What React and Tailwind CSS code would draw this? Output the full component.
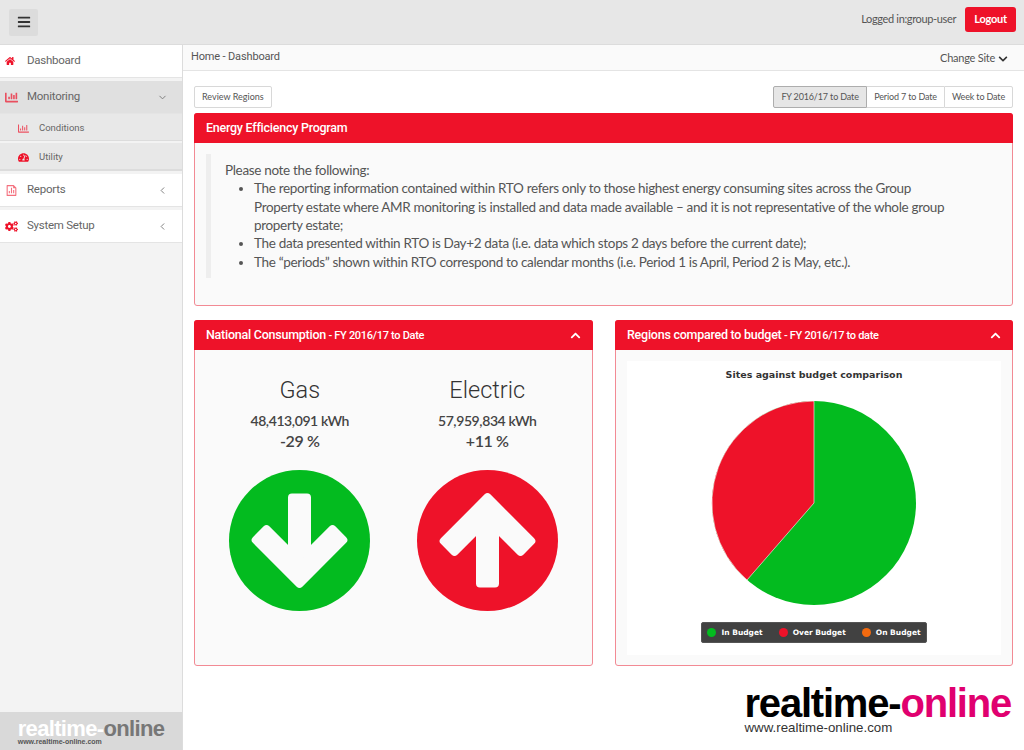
import { FaBars, FaHome, FaChartBar, FaRegChartBar, FaTachometerAlt, FaCogs, FaChevronDown, FaChevronUp } from "react-icons/fa";
import { RiFileChartLine } from "react-icons/ri";
import { ChevronDown, ChevronLeft } from "lucide-react";

const heading = "font-['Roboto',sans-serif]";
const arrow = "M-7.5 -43 L7.5 -43 L7.5 14.16 L33 -11.3 L43.8 -0.5 L0 43.3 L-43.8 -0.5 L-33 -11.3 L-7.5 14.16 Z";

const Panel = ({ title, small, collapse, className, children }) => (
  <section className={`flex flex-col rounded-[3px] border border-[#f28a94] bg-[#fafafa] ${className}`}>
    <header className={`-mx-px -mt-px flex h-[30px] shrink-0 items-center justify-between rounded-t-[3px] bg-[#ee1229] pl-3 pr-3 text-[12.5px] font-medium tracking-[-0.25px] text-white ${heading}`}>
      <span>
        {title}
        {small && <span className="text-[11px] tracking-[-0.3px]"> - {small}</span>}
      </span>
      {collapse && <FaChevronUp size={11} />}
    </header>
    {children}
  </section>
);

const Meter = ({ label, kwh, pct, color, up }) => (
  <div className="flex w-[187.5px] flex-col items-center">
    <h3 className={`mt-[25px] text-[23.5px] leading-[30px] font-light text-[#333] ${heading}`}>{label}</h3>
    <p className="mt-[6px] text-[14px] leading-[20px] font-semibold tracking-[-0.4px] text-[#444]">{kwh}</p>
    <p className="text-[16px] leading-[20px] font-semibold tracking-[-0.4px] text-[#444]">{pct}</p>
    <svg className="mt-[19px]" width="141" height="141" viewBox="-70.5 -70.5 141 141">
      <circle r="70.5" fill={color} />
      <path d={arrow} transform={up ? "rotate(180)" : undefined} fill="#fafafa" stroke="#fafafa" strokeWidth="8" strokeLinejoin="round" />
    </svg>
  </div>
);

const NavItem = ({ icon, label, chevron, active }) => (
  <div className={`flex h-[33px] items-center border-b border-[#e4e4e4] pl-[5px] pr-[14px] text-[#666] ${active ? "bg-[#e0e0e0]" : "bg-white"}`}>
    <span className="flex w-[22px] shrink-0 text-[#ee1229]">{icon}</span>
    <span className={`text-[11.5px] tracking-[-0.25px] ${heading}`}>{label}</span>
    {chevron && <span className="ml-auto text-[#777]">{chevron}</span>}
  </div>
);

const SubItem = ({ icon, label }) => (
  <div className="flex h-[27px] items-center border-b border-[#dcdcdc] bg-[#e8e8e8] pt-[2px] pl-[18px] text-[#666]">
    <span className="flex w-[21px] shrink-0 text-[#ee1229]">{icon}</span>
    <span className={`text-[9.5px] ${heading}`}>{label}</span>
  </div>
);

const Logo = ({ dark }) => (
  <div className="font-['Liberation_Sans',sans-serif]">
    <div className={`font-bold tracking-[-0.03em] ${dark ? "text-[40px] leading-[30px] text-black" : "text-[22px] leading-[18px] text-white"}`}>
      realtime-<span className={dark ? "text-[#e0006f]" : "text-[#777]"}>online</span>
    </div>
    <div className={dark ? "mt-[3px] text-[13.3px] leading-[14px] font-medium text-[#333]" : "text-[7px] leading-[8px] font-bold text-[#555]"}>www.realtime-online.com</div>
  </div>
);

const App = () => {
  return (
    <div className="flex h-[750px] w-[1024px] flex-col overflow-hidden bg-white font-['Lato',sans-serif] text-[#555]">
      <header className="flex h-[45px] shrink-0 items-center justify-between border-b border-[#dcdcdc] bg-[#e7e7e7] pl-[9px] pr-[8px]">
        <button className="flex h-[27px] w-[29px] items-center justify-center rounded-[2px] bg-[#dcdcdc] text-[#333]">
          <FaBars size={14} />
        </button>
        <div className="flex items-center gap-[9px] self-start pt-[7px]">
          <span className="text-[11px] tracking-[-0.35px] text-[#555]">Logged in:group-user</span>
          <button className="h-[25px] rounded-[3px] bg-[#ee1229] px-[9px] text-[11px] font-bold tracking-[-0.2px] text-white">Logout</button>
        </div>
      </header>

      <div className="flex min-h-0 flex-1">
        <aside className="flex w-[183px] shrink-0 flex-col border-r border-[#dcdcdc] bg-[#f3f3f3]">
          <nav className="flex flex-col gap-[3px]">
            <NavItem icon={<FaHome size={10} />} label="Dashboard" />
            <div>
              <NavItem icon={<FaChartBar size={13} className="opacity-70" />} label="Monitoring" chevron={<ChevronDown size={11} />} active />
              <div className="flex flex-col gap-[2px] border-b border-[#dcdcdc]">
                <SubItem icon={<FaRegChartBar size={11} className="opacity-70" />} label="Conditions" />
                <SubItem icon={<FaTachometerAlt size={11} />} label="Utility" />
              </div>
            </div>
            <NavItem icon={<RiFileChartLine size={13} className="opacity-60" />} label="Reports" chevron={<ChevronLeft size={11} />} />
            <NavItem icon={<FaCogs size={13} />} label="System Setup" chevron={<ChevronLeft size={11} />} />
          </nav>
          <div className="mt-auto flex h-[38px] items-center justify-center bg-[#d9d9d9] pt-[4px]">
            <Logo />
          </div>
        </aside>

        <main className="flex min-w-0 flex-1 flex-col">
          <div className="flex h-[26px] shrink-0 items-center justify-between border-b border-[#e4e4e4] bg-[#fafafa] pl-[8px] pr-[16px]">
            <span className={`text-[11px] tracking-[-0.15px] text-[#555] ${heading}`}>Home - Dashboard</span>
            <span className="flex items-center gap-[3px] pt-[2px] text-[11px] tracking-[-0.25px] text-[#555]">
              Change Site <FaChevronDown size={10} className="text-[#333]" />
            </span>
          </div>

          <div className="flex flex-1 flex-col px-[11px] pt-[15px]">
            <div className="flex h-[22px] items-center justify-between text-[9px]">
              <button className="h-[22px] rounded-[2px] border border-[#d8d8d8] bg-white px-[7px] text-[#555]">Review Regions</button>
              <div className="flex tracking-[-0.15px]">
                <button className="h-[22px] rounded-l-[2px] border border-[#adadad] bg-[#e6e6e6] px-[7.5px] text-[#555]">FY 2016/17 to Date</button>
                <button className="h-[22px] border-y border-[#d8d8d8] bg-white px-[7px] text-[#555]">Period 7 to Date</button>
                <button className="h-[22px] rounded-r-[2px] border border-[#d8d8d8] bg-white px-[7px] text-[#555]">Week to Date</button>
              </div>
            </div>

            <Panel title="Energy Efficiency Program" className="mt-[5px] h-[193px]">
              <blockquote className="mt-[11px] ml-[11px] h-[124px] border-l-[5px] border-[#eeeeee] pt-[7px] pl-[14px] pr-[60px] text-[13.5px] leading-[18.33px] tracking-[-0.33px] text-[#555]">
                <p>Please note the following:</p>
                <ul className="list-disc pl-[29px]">
                  <li>The reporting information contained within RTO refers only to those highest energy consuming sites across the Group Property estate where AMR monitoring is installed and data made available – and it is not representative of the whole group property estate;</li>
                  <li>The data presented within RTO is Day+2 data (i.e. data which stops 2 days before the current date);</li>
                  <li>The “periods” shown within RTO correspond to calendar months (i.e. Period 1 is April, Period 2 is May, etc.).</li>
                </ul>
              </blockquote>
            </Panel>

            <div className="mt-[14px] flex gap-[22px]">
              <Panel title="National Consumption" small="FY 2016/17 to Date" collapse className="h-[346px] w-[399px]">
                <div className="flex justify-center">
                  <Meter label="Gas" kwh="48,413,091 kWh" pct="-29 %" color="#03bb1f" />
                  <Meter label="Electric" kwh="57,959,834 kWh" pct="+11 %" color="#ee1229" up />
                </div>
              </Panel>

              <Panel title="Regions compared to budget" small="FY 2016/17 to date" collapse className="h-[346px] w-[398px]">
                <div className="mx-[11px] mt-[11px] flex h-[294px] flex-col items-center bg-white">
                  <h4 className="mt-[8px] font-['DejaVu_Sans',sans-serif] text-[9.5px] leading-[12px] font-bold text-[#333]">Sites against budget comparison</h4>
                  <svg className="mt-[19px]" width="206" height="206" viewBox="-103 -103 206 206">
                    <circle r="102" fill="#03bb1f" />
                    <path d="M0 0 L0 -102 A102 102 0 0 0 -67 77 Z" fill="#ee1229" stroke="#fff" strokeWidth="0.6" />
                  </svg>
                  <div className="mt-[16px] flex h-[21px] items-center gap-[16px] rounded-[2px] border border-[#555] bg-[#414141] px-[5px] font-['DejaVu_Sans',sans-serif] text-[7.5px] font-bold text-white">
                    <span className="flex items-center gap-[5px]"><i className="size-[9px] rounded-full bg-[#03bb1f]" />In Budget</span>
                    <span className="flex items-center gap-[5px]"><i className="size-[9px] rounded-full bg-[#ee1229]" />Over Budget</span>
                    <span className="flex items-center gap-[5px]"><i className="size-[9px] rounded-full bg-[#f26a0f]" />On Budget</span>
                  </div>
                </div>
              </Panel>
            </div>

            <div className="mt-[22px] flex justify-end pr-[2px]">
              <Logo dark />
            </div>
          </div>
        </main>
      </div>
    </div>
  );
};

export default App;
